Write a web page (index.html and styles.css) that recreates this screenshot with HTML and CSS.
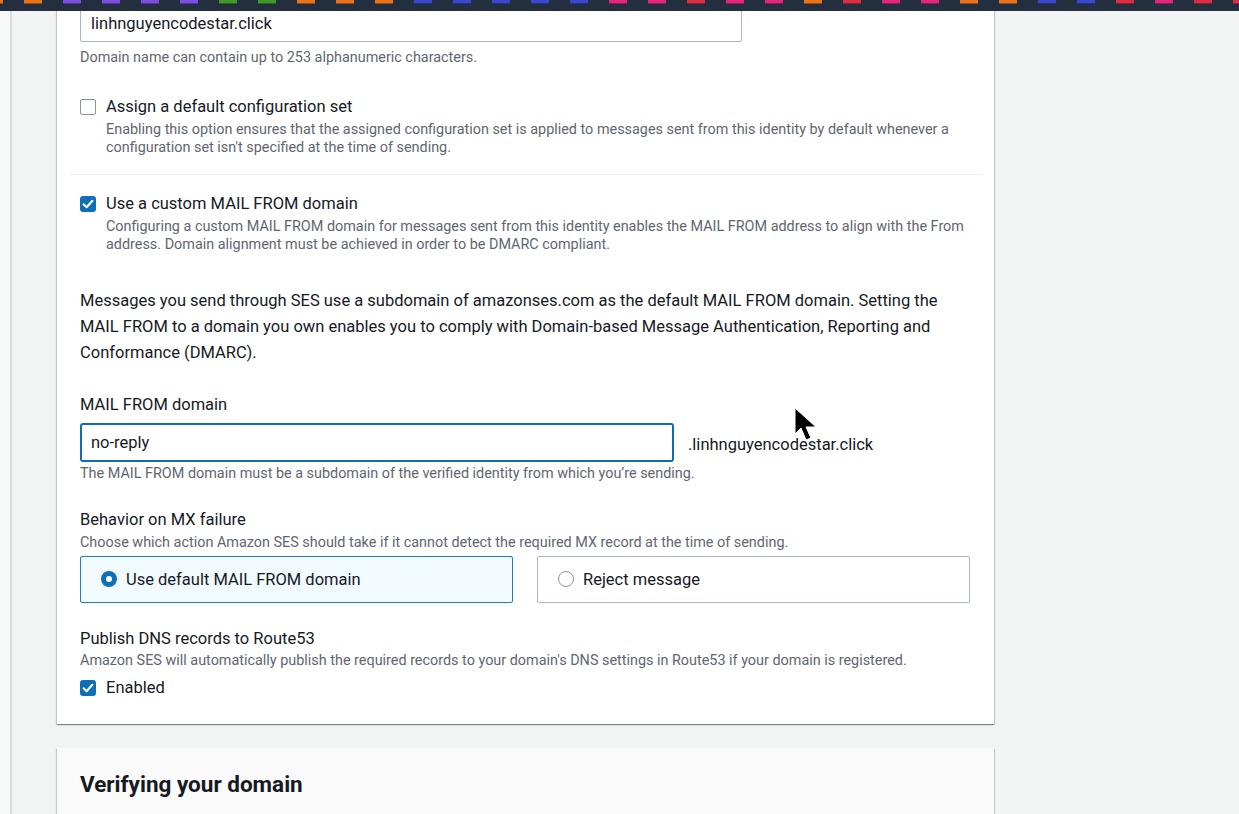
FILE: index.html
```html
<!DOCTYPE html>
<html lang="en">
<head>
<meta charset="utf-8">
<title>Create identity - Amazon SES</title>
<link rel="stylesheet" href="styles.css">
</head>
<body>
<div class="topbar">
  <div class="favs">
    <span class="fav orange"></span><span class="fav orange"></span><span class="fav purple"></span><span class="fav purple"></span><span class="fav purple"></span><span class="fav purple"></span><span class="fav green"></span><span class="fav green"></span><span class="fav orange"></span><span class="fav orange"></span><span class="fav orange"></span><span class="fav blue"></span><span class="fav blue"></span><span class="fav blue"></span><span class="fav blue"></span><span class="fav blue"></span><span class="fav pink"></span><span class="fav pink"></span><span class="fav red"></span><span class="fav pink"></span><span class="fav pink"></span><span class="fav orange"></span><span class="fav red"></span><span class="fav pink"></span><span class="fav pink"></span><span class="fav orange"></span><span class="fav orange"></span><span class="fav blue"></span><span class="fav blue"></span><span class="fav red"></span><span class="fav pink"></span><span class="fav red"></span><span class="fav red"></span>
  </div>
</div>

<div class="layout">
  <div class="rail"></div>
  <main class="main">
    <section class="card">
      <div class="input static">linhnguyencodestar.click</div>
      <p class="hint first-hint">Domain name can contain up to 253 alphanumeric characters.</p>

      <div class="check-row row-assign">
        <span class="cbox"></span>
        <div class="check-text">
          <div class="check-label">Assign a default configuration set</div>
          <div class="check-desc">Enabling this option ensures that the assigned configuration set is applied to messages sent from this identity by default whenever a configuration set isn't specified at the time of sending.</div>
        </div>
      </div>

      <div class="divider"></div>

      <div class="check-row row-custom">
        <span class="cbox checked"><svg viewBox="0 0 16 16" width="16" height="16"><path d="M3.6 8.3 L6.6 11.2 L12.4 4.8" fill="none" stroke="#fff" stroke-width="2.1" stroke-linecap="round" stroke-linejoin="round"/></svg></span>
        <div class="check-text">
          <div class="check-label">Use a custom MAIL FROM domain</div>
          <div class="check-desc">Configuring a custom MAIL FROM domain for messages sent from this identity enables the MAIL FROM address to align with the From address. Domain alignment must be achieved in order to be DMARC compliant.</div>
        </div>
      </div>

      <p class="body-text">Messages you send through SES use a subdomain of amazonses.com as the default MAIL FROM domain. Setting the MAIL FROM to a domain you own enables you to comply with Domain-based Message Authentication, Reporting and Conformance (DMARC).</p>

      <div class="field-label mf-label">MAIL FROM domain</div>
      <div class="input-row">
        <div class="input focused">no-reply</div>
        <span class="suffix">.linhnguyencodestar.click</span>
      </div>
      <p class="hint mf-hint">The MAIL FROM domain must be a subdomain of the verified identity from which you’re sending.</p>

      <div class="field-label mx-label">Behavior on MX failure</div>
      <p class="hint mx-hint">Choose which action Amazon SES should take if it cannot detect the required MX record at the time of sending.</p>
      <div class="tiles">
        <div class="tile selected"><span class="radio on"></span><span class="tile-label">Use default MAIL FROM domain</span></div>
        <div class="tile"><span class="radio"></span><span class="tile-label">Reject message</span></div>
      </div>

      <div class="field-label dns-label">Publish DNS records to Route53</div>
      <p class="hint dns-hint">Amazon SES will automatically publish the required records to your domain's DNS settings in Route53 if your domain is registered.</p>
      <div class="enabled-row">
        <span class="cbox checked"><svg viewBox="0 0 16 16" width="16" height="16"><path d="M3.6 8.3 L6.6 11.2 L12.4 4.8" fill="none" stroke="#fff" stroke-width="2.1" stroke-linecap="round" stroke-linejoin="round"/></svg></span>
        <span class="enabled-label">Enabled</span>
      </div>
    </section>

    <section class="card card-secondary">
      <h2 class="card-title">Verifying your domain</h2>
    </section>
  </main>
  <div class="side"></div>
</div>

<svg class="cursor" width="26" height="36" viewBox="0 0 26 36">
  <path d="M1 1 L1 27 L7 21 L12 33 L17 31 L12 20 L22 20 Z" fill="#000" stroke="#fff" stroke-width="1" stroke-linejoin="round"/>
</svg>
</body>
</html>
```
FILE: styles.css
```css
* { box-sizing: border-box; }

html, body {
  margin: 0;
  padding: 0;
  height: 100%;
  overflow: hidden;
}

body {
  background: #f2f3f3;
  font-family: Roboto, "Liberation Sans", Arial, sans-serif;
  color: #16191f;
  font-size: 16.5px;
}

.topbar {
  position: fixed;
  top: 0;
  left: 0;
  right: 0;
  height: 11px;
  background: #232f3e;
  z-index: 10;
  overflow: hidden;
}

.favs {
  display: flex;
  gap: 21px;
  margin-left: -15px;
}

.fav {
  flex: 0 0 18px;
  height: 4px;
  border-bottom: 1px solid rgba(0, 0, 0, 0.35);
}

.fav.orange { background: #e8741c; }
.fav.purple { background: #7d4fe0; }
.fav.green  { background: #3d9a2a; }
.fav.blue   { background: #3b48cc; }
.fav.pink   { background: #e0267f; }
.fav.red    { background: #d92e45; }

.layout {
  display: flex;
  min-height: 100%;
}

.rail {
  flex: 0 0 12px;
  background: #f8f9f9;
  border-right: 2px solid #d9dede;
}

.main {
  flex: 0 0 937px;
  margin-left: 45px;
}

.side {
  flex: 1;
}

.card {
  background: #fff;
  margin-top: -16px;
  padding: 20px 24px 24px 23px;
  box-shadow: 0 1px 1px 0 rgba(0, 28, 36, 0.3), 1px 1px 1px 0 rgba(0, 28, 36, 0.15), -1px 1px 1px 0 rgba(0, 28, 36, 0.15);
}

.card-secondary {
  margin-top: 24px;
  background: #fafafa;
  padding-top: 22px;
  height: 200px;
}

.card-title {
  margin: 0;
  font-size: 22.5px;
  line-height: 28px;
  font-weight: 700;
  color: #16191f;
}

.input {
  height: 38px;
  border: 1px solid #aab7b8;
  border-radius: 2px;
  padding: 0 10px;
  display: flex;
  align-items: center;
  font-size: 16.5px;
  color: #16191f;
  background: #fff;
}

.input.static {
  width: 662px;
  padding-top: 1px;
}

.input.focused {
  width: 594px;
  height: 39px;
  border: 2px solid #0f6db3;
  border-radius: 3px;
  padding-left: 9px;
}

p { margin: 0; }

.hint {
  font-size: 14.4px;
  line-height: 18.5px;
  color: #5f6670;
}

.first-hint { margin-top: 7px; }

.check-row {
  display: flex;
  align-items: flex-start;
  gap: 10px;
}

.row-assign { margin-top: 27px; }
.row-custom { margin-top: 17px; }

.cbox {
  flex: 0 0 16px;
  width: 16px;
  height: 16px;
  margin-top: 4px;
  border: 1px solid #8d9496;
  border-radius: 2px;
  background: #fff;
  display: flex;
}

.cbox.checked {
  border: none;
  background: #0f6fb6;
  border-radius: 3px;
}

.check-label {
  font-size: 16.5px;
  line-height: 24px;
}

.check-desc {
  margin-top: 2px;
  font-size: 14.4px;
  line-height: 18.5px;
  color: #5f6670;
}

.divider {
  height: 1px;
  background: #eceeef;
  margin: 16px -12px 0 -10px;
}

.body-text {
  margin-top: 33px;
  font-size: 16.5px;
  line-height: 26px;
  max-width: 890px;
}

.field-label {
  font-size: 16.5px;
  line-height: 22px;
}

.mf-label { margin-top: 28px; }

.input-row {
  margin-top: 7px;
  display: flex;
  align-items: center;
  gap: 14px;
}

.suffix {
  font-size: 16.5px;
  padding-top: 5px;
}

.mf-hint { margin-top: 3px; }
.mx-label { margin-top: 26px; }
.mx-hint { margin-top: 3px; }

.tiles {
  margin-top: 3px;
  display: grid;
  grid-template-columns: 433px 433px;
  gap: 24px;
}

.tile {
  height: 47px;
  border: 1px solid #aab7b8;
  border-radius: 2px;
  display: flex;
  align-items: center;
  padding-left: 20px;
  gap: 9px;
  background: #fff;
}

.tile.selected {
  border-color: #1f7cc1;
  background: #f1faff;
}

.radio {
  width: 16px;
  height: 16px;
  border-radius: 50%;
  border: 1.5px solid #8d9496;
  background: #fff;
  flex: 0 0 16px;
}

.radio.on {
  border: 5px solid #0f6fb6;
}

.tile-label {
  font-size: 16.5px;
}

.dns-label { margin-top: 25px; }
.dns-hint { margin-top: 2px; }

.enabled-row {
  margin-top: 6px;
  display: flex;
  align-items: flex-start;
  gap: 10px;
  line-height: 24px;
}

.enabled-label {
  font-size: 16.5px;
}

.cursor {
  position: absolute;
  left: 794px;
  top: 407px;
  z-index: 20;
}
```
